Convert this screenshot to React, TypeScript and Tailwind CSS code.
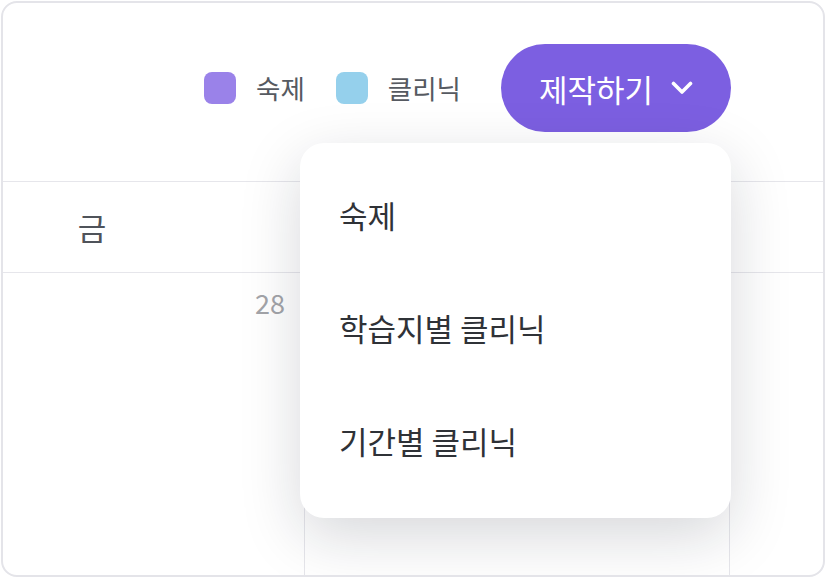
import React from 'react';

const font = { fontFamily: '"Noto Sans CJK KR", "Noto Sans", sans-serif' };

function LegendItem({ color, label }: { color: string; label: string }) {
  return (
    <div className="flex items-center gap-[20px]">
      <span className={`h-[32px] w-[32px] rounded-[8px] ${color}`} />
      <span className="text-[26.5px] leading-none text-[#565a61]">{label}</span>
    </div>
  );
}

function ChevronDown() {
  return (
    <svg width="22" height="14" viewBox="0 0 22 14" fill="none">
      <path d="M2.5 2.5 11 11 19.5 2.5" stroke="white" strokeWidth="3.6" strokeLinecap="round" strokeLinejoin="round" />
    </svg>
  );
}

const menuItems = ['숙제', '학습지별 클리닉', '기간별 클리닉'];

export default function App() {
  return (
    <div className="h-[578px] w-[826px] bg-white p-[1px]" style={font}>
      <div className="relative flex h-full flex-col overflow-hidden rounded-[16px] border-2 border-[#e4e4e9] bg-white">
        {/* Header: legend + create button */}
        <div className="flex h-[178px] shrink-0 items-start justify-end pr-[92px] pt-[41px]">
          <div className="flex h-[88px] items-center">
            <div className="mr-[40px] flex items-center gap-[31px]">
              <LegendItem color="bg-[#9a82e9]" label="숙제" />
              <LegendItem color="bg-[#95d0ec]" label="클리닉" />
            </div>
            <button className="flex h-[88px] items-center gap-[18px] rounded-full bg-[#7c5fe1] pl-[38px] pr-[38px] text-[31px] leading-none text-white">
              <span>제작하기</span>
              <ChevronDown />
            </button>
          </div>
        </div>

        {/* Calendar (cropped week view) */}
        <div className="ml-[-123px] flex flex-1 flex-col">
          <div className="flex h-[92px] shrink-0 border-y border-[#e6e6eb]">
            <div className="flex w-[425px] shrink-0 items-center justify-center border-r border-[#e6e6eb] text-[31px] text-[#4f535a]">
              금
            </div>
            <div className="flex w-[425px] shrink-0 items-center justify-center border-r border-[#e6e6eb] text-[31px] text-[#4f535a]">
              토
            </div>
            <div className="w-[425px] shrink-0" />
          </div>
          <div className="flex flex-1">
            <div className="w-[425px] shrink-0 border-r border-[#e6e6eb] pr-[19px] pt-[16px] text-right text-[27px] leading-none text-[#a3a4a9]">
              28
            </div>
            <div className="w-[425px] shrink-0 border-r border-[#e6e6eb] pr-[19px] pt-[16px] text-right text-[27px] leading-none text-[#a3a4a9]">
              29
            </div>
            <div className="w-[425px] shrink-0" />
          </div>
        </div>

        {/* Dropdown menu */}
        <div className="absolute left-[297px] top-[140px] w-[431px] rounded-[24px] bg-white pb-[21px] pt-[15px] shadow-[0_18px_60px_rgba(20,24,40,0.17)]">
          {menuItems.map((item) => (
            <div key={item} className="flex h-[113px] items-center pl-[39px] text-[31px] leading-none text-[#2f3237]">
              {item}
            </div>
          ))}
        </div>
      </div>
    </div>
  );
}
